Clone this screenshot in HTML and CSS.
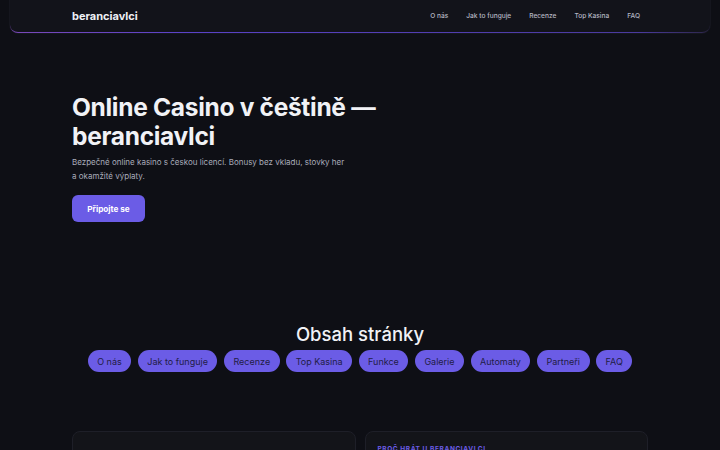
FILE: index.html
```html
<!DOCTYPE html>
<html lang="cs">
<head>
<meta charset="utf-8">
<title>beranciavlci</title>
<link rel="stylesheet" href="styles.css">
</head>
<body>
<header class="topbar">
  <div class="container bar-inner">
    <a class="logo" href="#">beranciavlci</a>
    <nav class="nav">
      <a href="#">O nás</a>
      <a href="#">Jak to funguje</a>
      <a href="#">Recenze</a>
      <a href="#">Top Kasina</a>
      <a href="#">FAQ</a>
    </nav>
  </div>
</header>

<section class="hero container">
  <h1>Online Casino v češtině —<br>beranciavlci</h1>
  <p class="lead">Bezpečné online kasino s českou licencí. Bonusy bez vkladu, stovky her<br>a okamžité výplaty.</p>
  <a class="btn" href="#">Připojte se</a>
</section>

<section class="toc container">
  <h2>Obsah stránky</h2>
  <div class="pills">
    <a class="pill" href="#">O nás</a>
    <a class="pill" href="#">Jak to funguje</a>
    <a class="pill" href="#">Recenze</a>
    <a class="pill" href="#">Top Kasina</a>
    <a class="pill" href="#">Funkce</a>
    <a class="pill" href="#">Galerie</a>
    <a class="pill" href="#">Automaty</a>
    <a class="pill" href="#">Partneři</a>
    <a class="pill" href="#">FAQ</a>
  </div>
</section>

<section class="cards container">
  <div class="card"></div>
  <div class="card"><div class="eyebrow">PROČ HRÁT U BERANCIAVLCI</div></div>
</section>
</body>
</html>
```
FILE: styles.css
```css
* { box-sizing: border-box; }
html, body { margin: 0; padding: 0; }
body {
  background: #0e0f15;
  color: #ecedf2;
  font-family: Inter, "Noto Sans", sans-serif;
  height: 450px;
  overflow: hidden;
}
a { text-decoration: none; color: inherit; }
.container { width: 576px; margin: 0 auto; }

.topbar {
  margin: 0 10px;
  height: 33px;
  border-bottom: 1.5px solid transparent;
  border-radius: 0 0 8px 8px;
  background:
    linear-gradient(#12131a, #12131a) padding-box,
    linear-gradient(90deg, #7a48b8, #5a42c8 25%, #4a3a9e 90%, #2c2648) border-box;
  box-shadow: 0 0 0 1px #15161e;
}
.bar-inner {
  display: flex;
  align-items: center;
  justify-content: space-between;
  height: 32px;
}
.logo { font-weight: 700; font-size: 11px; color: #eef0f5; }
.nav { display: flex; gap: 18px; padding-right: 8px; }
.nav a { font-size: 6.6px; color: #b6b8c4; font-weight: 500; }

.hero { padding-top: 60px; }
.hero h1 {
  margin: 0;
  font-size: 24.5px;
  line-height: 29px;
  font-weight: 700;
  letter-spacing: -0.3px;
  color: #f1f2f6;
}
.lead {
  margin: 4px 0 0;
  font-size: 8px;
  line-height: 14px;
  color: #a9acba;
}
.btn {
  display: inline-flex;
  align-items: center;
  justify-content: center;
  margin-top: 12px;
  width: 73px;
  height: 27px;
  border-radius: 6px;
  background: #6b5ce6;
  color: #fff;
  font-size: 8.2px;
  font-weight: 700;
}

.toc { margin-top: 100px; text-align: center; }
.toc h2 {
  margin: 0;
  font-size: 18.5px;
  line-height: 24px;
  font-weight: 500;
  color: #f1f2f6;
}
.pills {
  display: flex;
  justify-content: center;
  gap: 6.5px;
  margin-top: 4px;
}
.pill {
  display: inline-flex;
  align-items: center;
  height: 22px;
  padding: 0 9.5px;
  border-radius: 11px;
  background: #6b5ce6;
  color: #221c45;
  font-size: 9px;
  font-weight: 400;
}

.cards {
  display: grid;
  grid-template-columns: 1fr 1fr;
  gap: 9px;
  margin-top: 59px;
}
.card {
  height: 120px;
  background: #131419;
  border: 1px solid #1e1f28;
  border-radius: 8px;
  padding: 13px 12px;
}
.eyebrow {
  font-size: 6.5px;
  letter-spacing: 0.6px;
  font-weight: 700;
  color: #6b5ce6;
}
```
